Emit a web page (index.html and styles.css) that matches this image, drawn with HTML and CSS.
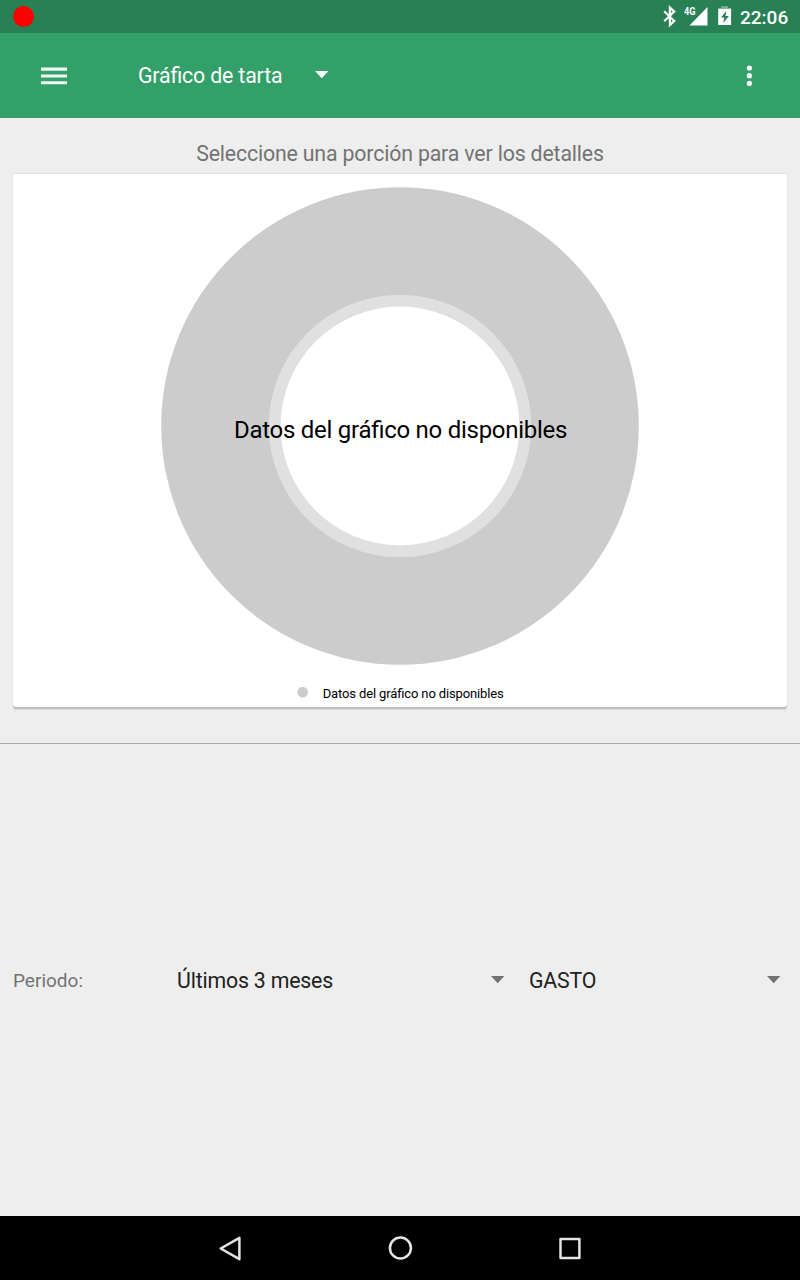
FILE: index.html
```html
<!DOCTYPE html>
<html lang="es">
<head>
<meta charset="utf-8">
<title>Gráfico de tarta</title>
<link rel="stylesheet" href="styles.css">
</head>
<body>
<div class="screen">
  <header class="status-bar">
    <span class="record-dot"></span>
    <svg class="status-icons" width="70" height="33" viewBox="0 0 70 33">
      <path d="M2.200 11.200 12.200 21 7.900 25V7.600l4.300 4L2.200 21.200" fill="none" stroke="#fff" stroke-width="2.200"/>
      <text class="network" x="22" y="15" textLength="11.500" lengthAdjust="spacingAndGlyphs">4G</text>
      <path d="M45.500 7v18.500h-18z" fill="#fff"/>
      <path d="M56.200 9.300V8h3V6.300h7V8h3v1.300z" fill="#fff" opacity=".4"/>
      <path fill-rule="evenodd" d="M56.200 9h12.900v16H56.200zM64.300 11 59 17.500h3.200l-1 5.500 5.700-7h-3.400z" fill="#fff"/>
    </svg>
    <span class="clock">22:06</span>
  </header>
  <nav class="app-bar">
    <svg class="menu-icon" width="26" height="20" viewBox="0 0 26 20" fill="#fff">
      <path d="M0 1.500h26v3.200H0zM0 8.500h26v3H0zM0 15.200h26v3H0z" opacity=".92"/>
    </svg>
    <span class="title">Gráfico de tarta</span>
    <svg class="title-caret" width="14" height="8" viewBox="0 0 14 8"><path d="M0 0h13.400L6.700 7.300z" fill="#fff"/></svg>
    <svg class="more-icon" width="6" height="22" viewBox="0 0 6 22" fill="#fff">
      <circle cx="3.400" cy="3" r="2.600"/><circle cx="3.400" cy="10.700" r="2.600"/><circle cx="3.400" cy="18.400" r="2.600"/>
    </svg>
  </nav>
  <main class="content">
    <p class="hint">Seleccione una porción para ver los detalles</p>
    <section class="card">
      <svg class="chart" width="774" height="533" viewBox="13 174 774 533">
        <circle cx="400" cy="426" r="238.800" fill="#ccc"/>
        <circle cx="400" cy="426" r="131.300" fill="#e0e0e0"/>
        <circle cx="400" cy="426" r="119.400" fill="#fff"/>
        <text class="chart-label" x="234" y="438">Datos del gráfico no disponibles</text>
        <circle cx="302.700" cy="692.200" r="5.400" fill="#ccc"/>
        <text class="legend-label" x="322.700" y="698">Datos del gráfico no disponibles</text>
      </svg>
    </section>
    <hr class="divider">
    <section class="filters">
      <span class="filter-label">Periodo:</span>
      <div class="select period">
        <span>Últimos 3 meses</span>
        <svg width="14" height="8" viewBox="0 0 14 8"><path d="M0 0h13.400L6.700 7.300z" fill="#737373"/></svg>
      </div>
      <div class="select kind">
        <span>GASTO</span>
        <svg width="14" height="8" viewBox="0 0 14 8"><path d="M0 0h13.400L6.700 7.300z" fill="#737373"/></svg>
      </div>
    </section>
  </main>
  <footer class="nav-bar">
    <svg width="24" height="28" viewBox="0 0 24 28"><path d="M2.700 14.500 21.400 3.800v21.400z"/></svg>
    <svg width="26" height="28" viewBox="0 0 26 28"><circle cx="13.400" cy="14" r="10.500"/></svg>
    <svg width="24" height="28" viewBox="0 0 24 28"><rect x="2.500" y="5" width="18.900" height="18.900"/></svg>
  </footer>
</div>
</body>
</html>
```
FILE: styles.css
```css
body {
  margin: 0;
  font-family: Roboto, "Liberation Sans", sans-serif;
  font-feature-settings: "liga" 1;
}

.screen {
  display: flex;
  flex-direction: column;
  width: 800px;
  height: 1280px;
  overflow: hidden;
  background: #eee;
}

.status-bar {
  display: flex;
  align-items: center;
  height: 33px;
  box-sizing: border-box;
  padding: 0 11px 0 13.300px;
  background: #288055;
}

.record-dot {
  width: 21px;
  height: 21px;
  border-radius: 50%;
  background: #f00;
}

.status-icons {
  margin-left: auto;
}

.network {
  font-size: 10.500px;
  font-weight: 700;
  fill: #fff;
}

.clock {
  width: 49px;
  margin-left: 8px;
  padding-top: 2px;
  color: #fff;
  font-size: 19px;
  font-weight: 500;
  line-height: 24px;
  white-space: nowrap;
}

.app-bar {
  display: flex;
  align-items: center;
  height: 85px;
  box-sizing: border-box;
  padding: 0 48px 0 41px;
  background: #339f69;
  color: #fff;
}

.title {
  width: 177px;
  margin-left: 71px;
  padding-top: 1px;
  font-size: 21.300px;
  letter-spacing: -0.150px;
  line-height: 28px;
}

.title-caret {
  margin-bottom: 2px;
}

.more-icon {
  margin-left: auto;
}

.content {
  display: flex;
  flex: 1;
  flex-direction: column;
}

.hint {
  margin: 0;
  padding: 22px 0 6px;
  color: #737373;
  font-size: 21.300px;
  letter-spacing: -0.160px;
  line-height: 28px;
  text-align: center;
}

.card {
  height: 533px;
  margin: 0 13px;
  border-radius: 3px;
  background: #fff;
  box-shadow: 0 -1px 0 #e2e2e2, 0 2px 1px #bcbcbc, 0 3px 1px #ddd;
}

.chart {
  display: block;
}

.chart-label {
  font-size: 24px;
  letter-spacing: -0.270px;
}

.legend-label {
  font-size: 13px;
  letter-spacing: -0.130px;
}

.divider {
  width: 100%;
  height: 1px;
  margin: 36px 0 0;
  border: 0;
  background: #aaa;
}

.filters {
  display: flex;
  flex: 1;
  align-items: center;
  padding: 2px 19px 0 13px;
  color: #212121;
  font-size: 21.300px;
  letter-spacing: -0.180px;
  line-height: 28px;
}

.filter-label {
  width: 164px;
  color: #737373;
  font-size: 19px;
  letter-spacing: 0;
}

.select {
  display: flex;
  align-items: center;
  justify-content: space-between;
}

.select svg {
  margin-bottom: 2px;
}

.period {
  width: 328px;
}

.kind {
  flex: 1;
  margin-left: 24px;
}

.nav-bar {
  display: flex;
  align-items: center;
  justify-content: center;
  gap: 145px;
  height: 64px;
  background: #000;
}

.nav-bar svg {
  fill: none;
  stroke: #e4e4e4;
  stroke-width: 2.500;
  stroke-linejoin: round;
}
```
